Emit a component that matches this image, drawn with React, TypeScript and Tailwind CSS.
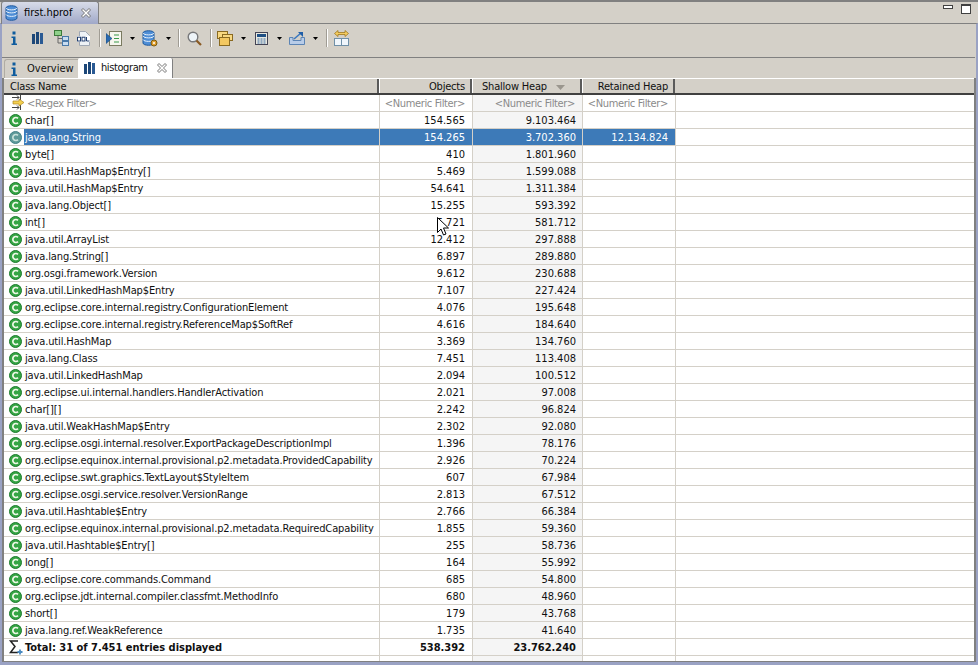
const FONT = "font-['DejaVu_Sans_Condensed','DejaVu_Sans',sans-serif]"

const ROWS: [string, string, string, string?][] = [
	["char[]", "154.565", "9.103.464"],
	["java.lang.String", "154.265", "3.702.360", "12.134.824"],
	["byte[]", "410", "1.801.960"],
	["java.util.HashMap$Entry[]", "5.469", "1.599.088"],
	["java.util.HashMap$Entry", "54.641", "1.311.384"],
	["java.lang.Object[]", "15.255", "593.392"],
	["int[]", "5.721", "581.712"],
	["java.util.ArrayList", "12.412", "297.888"],
	["java.lang.String[]", "6.897", "289.880"],
	["org.osgi.framework.Version", "9.612", "230.688"],
	["java.util.LinkedHashMap$Entry", "7.107", "227.424"],
	["org.eclipse.core.internal.registry.ConfigurationElement", "4.076", "195.648"],
	["org.eclipse.core.internal.registry.ReferenceMap$SoftRef", "4.616", "184.640"],
	["java.util.HashMap", "3.369", "134.760"],
	["java.lang.Class", "7.451", "113.408"],
	["java.util.LinkedHashMap", "2.094", "100.512"],
	["org.eclipse.ui.internal.handlers.HandlerActivation", "2.021", "97.008"],
	["char[][]", "2.242", "96.824"],
	["java.util.WeakHashMap$Entry", "2.302", "92.080"],
	["org.eclipse.osgi.internal.resolver.ExportPackageDescriptionImpl", "1.396", "78.176"],
	["org.eclipse.equinox.internal.provisional.p2.metadata.ProvidedCapability", "2.926", "70.224"],
	["org.eclipse.swt.graphics.TextLayout$StyleItem", "607", "67.984"],
	["org.eclipse.osgi.service.resolver.VersionRange", "2.813", "67.512"],
	["java.util.Hashtable$Entry", "2.766", "66.384"],
	["org.eclipse.equinox.internal.provisional.p2.metadata.RequiredCapability", "1.855", "59.360"],
	["java.util.Hashtable$Entry[]", "255", "58.736"],
	["long[]", "164", "55.992"],
	["org.eclipse.core.commands.Command", "685", "54.800"],
	["org.eclipse.jdt.internal.compiler.classfmt.MethodInfo", "680", "48.960"],
	["short[]", "179", "43.768"],
	["java.lang.ref.WeakReference", "1.735", "41.640"],
]

function InfoIcon() {
	return (
		<svg width="8" height="15" viewBox="0 0 8 15" className="shrink-0">
			<rect x="2.500" y="0.500" width="3" height="3" fill="#0f5c9e" />
			<path d="M1.500 5.500h4v7H7V14H1.500v-1.500H3v-5.500H1.500z" fill="#0f5c9e" />
		</svg>
	)
}

function ChartIcon() {
	return (
		<svg width="11" height="12" viewBox="0 0 11 12" className="shrink-0">
			<rect x="0" y="2" width="3" height="10" fill="#1c4778" />
			<rect x="4" y="0" width="3" height="12" fill="#1c4778" />
			<rect x="8" y="1" width="3" height="11" fill="#2a5a94" />
		</svg>
	)
}

function ClassIcon({ dim }: { dim?: boolean }) {
	return (
		<svg width="13" height="13" viewBox="0 0 13 13" className="shrink-0">
			<circle cx="6.500" cy="6.500" r="6" fill={dim ? "#5f9a9a" : "#35a544"} stroke={dim ? "#447f88" : "#1d7a2c"} />
			<path d="M9 4.400a3 3 0 1 0 0 4.200" fill="none" stroke={dim ? "#c8e0dc" : "#f0f8e8"} strokeWidth="1.700" />
		</svg>
	)
}

function CloseIcon() {
	return (
		<svg width="10" height="10" viewBox="0 0 10 10" className="shrink-0">
			<path d="M2 .500 5 3.500 8 .500 9.500 2 6.500 5 9.500 8 8 9.500 5 6.500 2 9.500 .500 8 3.500 5 .500 2z" fill="#fff" stroke="#555" strokeWidth="0.800" />
		</svg>
	)
}

function DropArrow() {
	return (
		<svg width="5" height="3" viewBox="0 0 5 3" className="shrink-0">
			<path d="M0 0h5L2.500 3z" fill="#000" />
		</svg>
	)
}

function Separator() {
	return <div className="w-[2px] h-[18px] bg-[#a09c94] border-r border-white" />
}

function DbIcon({ gear }: { gear?: boolean }) {
	return (
		<svg width="16" height="17" viewBox="0 0 16 17" className="shrink-0">
			<path d="M1 3c0-3 11-3 11 0v10c0 3-11 3-11 0z" fill="#4f8ed6" stroke="#1f5a9e" />
			<path d="M1 6c1 2.500 10 2.500 11 0M1 9.500c1 2.500 10 2.500 11 0M1 3c1 2.500 10 2.500 11 0" fill="none" stroke="#e6f0fa" />
			{gear && <circle cx="12" cy="13" r="3" fill="#e0a030" stroke="#7a5a10" />}
			{gear && <circle cx="12" cy="13" r="1" fill="#fff" />}
		</svg>
	)
}

function Toolbar() {
	return (
		<div className="h-[32px] shrink-0 pb-[6px] flex items-center">
			<div className="ml-[8px]"><InfoIcon /></div>
			<div className="ml-[14px]"><ChartIcon /></div>
			<svg width="15" height="16" viewBox="0 0 15 16" className="ml-[11px]">
				<rect x="0.500" y="0.500" width="7" height="5" fill="#8fd08a" stroke="#3d7a3a" />
				<path d="M4 6v7h4M4 8.500h4" fill="none" stroke="#666" />
				<rect x="8.500" y="6.500" width="6" height="4" fill="#c8dcf0" stroke="#4878a8" />
				<rect x="8.500" y="11.500" width="6" height="4" fill="#c8dcf0" stroke="#4878a8" />
			</svg>
			<svg width="13" height="15" viewBox="0 0 13 15" className="ml-[8px]">
				<path d="M2.500.500h6l4 4v10h-10z" fill="#eef2f6" stroke="#a0a8b4" />
				<rect x="0" y="5" width="13" height="6" fill="#fff" />
				<rect x="0.500" y="6.200" width="3" height="3.800" fill="none" stroke="#1f3d6e" />
				<rect x="5" y="6.200" width="3" height="3.800" fill="none" stroke="#1f3d6e" />
				<path d="M9.500 6v4h3" fill="none" stroke="#1f3d6e" />
			</svg>
			<div className="ml-[9px]"><Separator /></div>
			<svg width="16" height="15" viewBox="0 0 16 15" className="ml-[5px]">
				<rect x="3.500" y="0.500" width="12" height="14" fill="#f6f6ee" stroke="#7a7a60" />
				<path d="M8 4h5M8 7.500h5M8 11h5" stroke="#3a9a4a" />
				<path d="M0 2.500v10l6-5z" fill="#2a6ab0" stroke="#184a80" strokeWidth="0.600" />
			</svg>
			<div className="ml-[8px]"><DropArrow /></div>
			<div className="ml-[7px]"><DbIcon gear /></div>
			<div className="ml-[8px]"><DropArrow /></div>
			<div className="ml-[7px]"><Separator /></div>
			<svg width="15" height="15" viewBox="0 0 15 15" className="ml-[7px]">
				<circle cx="6" cy="6" r="4.800" fill="#eef4f8" stroke="#77787a" strokeWidth="1.400" />
				<path d="M9.500 9.500 14 14" stroke="#8a5a24" strokeWidth="2.200" />
			</svg>
			<div className="ml-[8px]"><Separator /></div>
			<svg width="16" height="15" viewBox="0 0 16 15" className="ml-[5px]">
				<rect x="0.500" y="0.500" width="10" height="7" fill="#f8d880" stroke="#8a6a20" />
				<rect x="5.500" y="3.500" width="10" height="6" fill="#f8d880" stroke="#8a6a20" />
				<rect x="2.500" y="6.500" width="10" height="8" fill="#f4c860" stroke="#8a6a20" />
			</svg>
			<div className="ml-[8px]"><DropArrow /></div>
			<svg width="13" height="13" viewBox="0 0 13 13" className="ml-[9px]">
				<rect x="0.500" y="0.500" width="12" height="12" fill="#e8e8e0" stroke="#445" />
				<rect x="2" y="2" width="9" height="3" fill="#1f4f84" />
				<path d="M2.500 7h2M5.500 7h2M8.500 7h2M2.500 9h2M5.500 9h2M8.500 9h2M2.500 11h2M5.500 11h2M8.500 11h2" stroke="#3a6aa0" />
			</svg>
			<div className="ml-[9px]"><DropArrow /></div>
			<svg width="16" height="14" viewBox="0 0 16 14" className="ml-[7px]">
				<path d="M.500 6.500h3.500v3h8v-3h3.500v7H.500z" fill="#b8cce8" stroke="#5c84b4" />
				<path d="M5 8 12 2" stroke="#3a78c0" strokeWidth="1.600" />
				<path d="M9 1h5v5z" fill="#1f5ea8" />
			</svg>
			<div className="ml-[8px]"><DropArrow /></div>
			<div className="ml-[8px]"><Separator /></div>
			<svg width="16" height="16" viewBox="0 0 16 16" className="ml-[6px]">
				<path d="M.500 3.500 4 .500v2h7v-2l3.500 3-3.500 3v-2H4v2z" fill="#f4cc60" stroke="#a07820" strokeWidth="0.800" />
				<rect x="0.500" y="8.500" width="7" height="7" fill="#f0f6fc" stroke="#7090a8" />
				<rect x="7.500" y="8.500" width="7" height="7" fill="#f0f6fc" stroke="#7090a8" />
			</svg>
		</div>
	)
}

function HeaderCell({ width, children, className = "" }: { width: string; children: React.ReactNode; className?: string }) {
	return (
		<div className={`${width} shrink-0 h-full pt-[2px] flex items-center tracking-[-0.2px] border-r-2 border-r-[#5a5a5a] border-l border-l-white ${className}`}>
			{children}
		</div>
	)
}

function Row({ name, objects, shallow, retained, selected, bold, icon }: {
	name: string
	objects: string
	shallow: string
	retained?: string
	selected?: boolean
	bold?: boolean
	icon: React.ReactNode
}) {
	return (
		<div className={`h-[17px] shrink-0 flex border-b border-[#d4d0c8] leading-[18px] ${selected ? "text-white" : "text-[#101010]"} ${bold ? "font-bold" : ""}`}>
			<div className="w-[375px] shrink-0 flex">
				<div className="w-[20px] pl-[5px] shrink-0 flex items-center">{icon}</div>
				<div className={`flex-1 h-full pl-[1px] whitespace-pre ${bold ? "" : "tracking-[-0.13px]"} ${selected ? "bg-[#3d7ab8]" : ""}`}>{name}</div>
			</div>
			<div className={`w-[93px] shrink-0 border-l border-[#d4d0c8] text-right pr-[7px] ${selected ? "bg-[#3d7ab8]" : ""}`}>{objects}</div>
			<div className={`w-[110px] shrink-0 border-l border-[#d4d0c8] text-right pr-[6px] ${selected ? "bg-[#3d7ab8]" : "bg-[#f5f5f5]"}`}>{shallow}</div>
			<div className={`w-[93px] shrink-0 border-l border-[#d4d0c8] text-right pr-[7px] ${selected ? "bg-[#3d7ab8]" : ""}`}>{retained}</div>
			<div className="flex-1 border-l border-[#d4d0c8]" />
		</div>
	)
}

export default function App() {
	return (
		<div className={`relative w-[978px] h-[665px] overflow-hidden bg-[#d4d0c8] flex flex-col text-[11px] ${FONT}`}>
			{/* editor tab strip */}
			<div className="h-[23px] shrink-0 border-t-2 border-[#808080] flex relative">
				<div className="w-[98px] -mt-[1px] ml-[1px] h-[23px] rounded-t-[3px] border border-b-0 border-[#808080] bg-gradient-to-b from-[#d8dce8] to-[#a0a8c8] flex items-center">
					<div className="ml-[3px]"><DbIcon /></div>
					<span className="ml-[3px] text-black">first.hprof</span>
					<div className="ml-[9px]"><CloseIcon /></div>
				</div>
				<div className="ml-auto mr-[7px] mt-[2px] flex items-start gap-[8px]">
					<div className="w-[10px] h-[4px] mt-[1px] bg-white border border-[#404040]" />
					<div className="w-[10px] h-[10px] bg-white border border-[#404040] border-t-[2px]" />
				</div>
			</div>

			{/* editor body */}
			<div className="flex-1 min-h-0 flex flex-col border-t border-t-[#808080] border-l-2 border-l-[#9aa2c4] border-r-2 border-r-[#9aa2c4] border-b-[3px] border-b-[#9aa2c4] pt-[1px]">
				<Toolbar />

				{/* inner tabs */}
				<div className="h-[21px] shrink-0 border-t border-[#808080] flex items-end mr-[1px]">
					<div className="w-[74px] h-[19px] ml-[2px] flex items-center border-t border-l border-[#b0aca4] rounded-tl-[3px]">
						<div className="ml-[5px]"><InfoIcon /></div>
						<span className="ml-[9px] text-[#101010]">Overview</span>
					</div>
					<div className="w-[95px] h-[20px] bg-white rounded-t-[2px] border-r border-[#808080] flex items-center">
						<div className="ml-[6px]"><ChartIcon /></div>
						<span className="ml-[6px] text-[#101010] tracking-[-0.4px]">histogram</span>
						<div className="ml-[9px]"><CloseIcon /></div>
					</div>
				</div>

				{/* table */}
				<div className="flex-1 min-h-0 flex flex-col bg-white border-l-2 border-l-[#808080] border-r-2 border-r-[#808080] border-b border-b-[#808080] overflow-hidden">
					<div className="h-[17px] shrink-0 flex bg-[#d4d0c8] border-b-2 border-[#404040] text-[#101010] border-t border-t-white">
						<div className="w-[375px] shrink-0 h-full pt-[2px] flex items-center pl-[6px] tracking-[-0.2px] border-r-2 border-r-[#5a5a5a]">Class Name</div>
						<HeaderCell width="w-[93px]" className="justify-end pr-[5px]">Objects</HeaderCell>
						<HeaderCell width="w-[110px]" className="pl-[9px] gap-[9px]">
							Shallow Heap
							<svg width="9" height="5" viewBox="0 0 9 5"><path d="M0 0h9L4.500 5z" fill="#9a968e" /></svg>
						</HeaderCell>
						<HeaderCell width="w-[93px]" className="justify-end pr-[5px]">Retained Heap</HeaderCell>
					</div>
					<div className="h-[17px] shrink-0 flex border-b border-[#d4d0c8] text-[#8a8a8a] leading-[18px] tracking-[-0.35px]">
						<div className="w-[375px] shrink-0 flex">
							<svg width="13" height="15" viewBox="0 0 13 15" className="ml-[8px] shrink-0">
								<path d="M0 2.500h7M5 .500l2 2-2 2M8.500 0v5M0 12.500h7M5 10.500l2 2-2 2M8.500 10v5" stroke="#444" fill="none" />
								<path d="M1 6h6V4l5 3.500L7 11V9H1z" fill="#f4d050" stroke="#b08820" strokeWidth="0.700" />
							</svg>
							<span className="ml-[2px]">&lt;Regex Filter&gt;</span>
						</div>
						<div className="w-[93px] shrink-0 border-l border-[#d4d0c8] text-right pr-[7px]">&lt;Numeric Filter&gt;</div>
						<div className="w-[110px] shrink-0 border-l border-[#d4d0c8] text-right pr-[7px] bg-[#f5f5f5]">&lt;Numeric Filter&gt;</div>
						<div className="w-[93px] shrink-0 border-l border-[#d4d0c8] text-right pr-[7px]">&lt;Numeric Filter&gt;</div>
						<div className="flex-1 border-l border-[#d4d0c8]" />
					</div>
					{ROWS.map((r, i) => (
						<Row key={i} name={r[0]} objects={r[1]} shallow={r[2]} retained={r[3]} selected={i === 1} icon={<ClassIcon dim={i === 1} />} />
					))}
					<Row
						name="Total: 31 of 7.451 entries displayed"
						objects="538.392"
						shallow="23.762.240"
						bold
						icon={
							<svg width="15" height="15" viewBox="0 0 15 15" className="shrink-0 -ml-[1px]">
								<path d="M10 1H2.500L7 6.500 2.500 12.500H10" fill="none" stroke="#222" strokeWidth="1.500" />
								<path d="M9.500 12h5M12 9.500v5" stroke="#4a8ac0" strokeWidth="1.800" />
							</svg>
						}
					/>
					<div className="flex-1 flex">
						<div className="w-[375px] shrink-0" />
						<div className="w-[93px] shrink-0 border-l border-[#d4d0c8]" />
						<div className="w-[110px] shrink-0 border-l border-[#d4d0c8] bg-[#f5f5f5]" />
						<div className="w-[93px] shrink-0 border-l border-[#d4d0c8]" />
						<div className="flex-1 border-l border-[#d4d0c8]" />
					</div>
				</div>
			</div>

			{/* mouse pointer */}
			<svg width="12" height="19" viewBox="0 0 12 19" className="absolute left-[437px] top-[217px]">
				<path d="M.500.500v15l3.500-3.500 2.500 6 2.500-1-2.500-6h5z" fill="#fff" stroke="#000" />
			</svg>
		</div>
	)
}
